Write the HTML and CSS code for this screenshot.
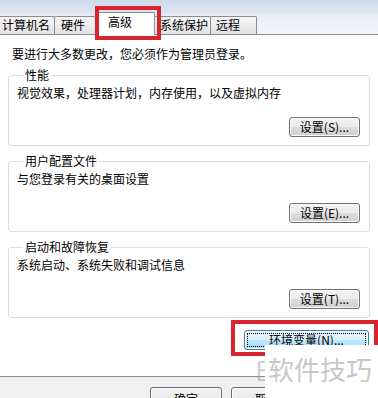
FILE: index.html
```html
<!DOCTYPE html>
<html lang="zh-CN">
<head>
  <meta charset="UTF-8" />
  <meta name="viewport" content="width=device-width, initial-scale=1.0"/>
  <title>系统属性 - 高级</title>
  <link rel="stylesheet" href="styles.css">
</head>
<body>
  <div class="window">
    <div class="frame-top"></div>

    <!-- tabs -->
    <div class="tabs">
      <div class="tab tab-name">计算机名</div>
      <div class="tab tab-hw">硬件</div>
      <div class="tab tab-adv active">高级</div>
      <div class="tab tab-prot">系统保护</div>
      <div class="tab tab-remote">远程</div>
    </div>

    <!-- tab page -->
    <div class="page">
      <p class="notice">要进行大多数更改，您必须作为管理员登录。</p>

      <fieldset class="group">
        <legend>性能</legend>
        <p class="desc">视觉效果，处理器计划，内存使用，以及虚拟内存</p>
        <div class="actions"><button class="btn">设置(S)...</button></div>
      </fieldset>

      <fieldset class="group">
        <legend>用户配置文件</legend>
        <p class="desc">与您登录有关的桌面设置</p>
        <div class="actions"><button class="btn">设置(E)...</button></div>
      </fieldset>

      <fieldset class="group">
        <legend>启动和故障恢复</legend>
        <p class="desc">系统启动、系统失败和调试信息</p>
        <div class="actions"><button class="btn">设置(T)...</button></div>
      </fieldset>

      <div class="actions env-row">
        <button class="btn btn-env">环境变量(N)...</button>
      </div>
    </div>

    <div class="footer">
      <button class="btn btn-dlg">确定</button>
      <button class="btn btn-dlg">取消</button>
    </div>

    <!-- annotations over the screenshot -->
    <div class="mark mark-tab"></div>
    <div class="mark mark-env"></div>
    <div class="watermark">
      <span class="wm-logo">E</span>
      <span class="wm-text">软件技巧</span>
    </div>
  </div>
</body>
</html>
```

FILE: styles.css
```css
* {
  box-sizing: border-box;
}
body {
  margin: 0;
  font-family: "Noto Sans CJK SC", "Liberation Sans", sans-serif;
  font-size: 12px;
  color: #000;
  background: #f0f0f0;
}
.window {
  position: relative;
  width: 378px;
  height: 398px;
  overflow: hidden;
  background: #f0f0f0;
}
.frame-top {
  height: 12px;
  background: linear-gradient(#cddaeb, #dbe5f1);
}

/* tabs */
.tabs {
  display: flex;
  align-items: flex-end;
  height: 22px;
  margin-left: -5px;
  background: linear-gradient(#dbe5f1 0, #e9eef5 4px, #f3f4f6 100%);
}
.tab {
  height: 18px;
  line-height: 16px;
  border: 1px solid #898c95;
  border-bottom: none;
  border-radius: 2px 2px 0 0;
  background: linear-gradient(#f5f5f5, #e3e3e3);
  margin-right: -1px;
  white-space: nowrap;
}
.tab-name { width: 60px; padding-left: 6px; }
.tab-hw { width: 42px; padding-left: 6px; }
.tab-adv { width: 60px; padding-left: 12px; }
.tab-prot { width: 57px; padding-left: 5px; }
.tab-remote { width: 47px; padding-left: 5px; }
.tab.active {
  position: relative;
  z-index: 1;
  height: 23px;
  margin-bottom: -1px;
  line-height: 18px;
  background: #fff;
}

.page {
  height: 343px;
  background: #fff;
  border-top: 1px solid #898c95;
  border-bottom: 1px solid #898c95;
  padding-top: 11px;
}
.notice {
  margin: 0 0 6px 12px;
  line-height: 16px;
}

/* group boxes */
.group {
  margin: 0 8px 8px;
  padding: 3px 9px 8px 8px;
  border: 1px solid #d5dfe5;
  border-radius: 3px;
  min-width: 0;
}
.group legend {
  margin-left: 6px;
  padding: 0 2px;
  line-height: 14px;
}
.desc {
  margin: 0;
  line-height: 16px;
}
.actions {
  display: flex;
  justify-content: flex-end;
  margin-top: 16px;
}

.btn {
  height: 20px;
  padding: 0;
  font-family: inherit;
  font-size: 12px;
  line-height: 16px;
  color: #000;
  border: 1px solid #707070;
  border-radius: 3px;
  background: linear-gradient(#f2f2f2 0%, #ebebeb 50%, #dddddd 51%, #cfcfcf 100%);
  box-shadow: inset 0 0 0 1px #fbfbfb;
}
.group .btn {
  width: 71px;
}
.env-row {
  margin: 12px 9px 0 0;
}
.btn-env {
  width: 125px;
  border-color: #3c7fb1;
  background: linear-gradient(#eaf6fd 0%, #d9f0fc 50%, #bee6fd 51%, #a7d9f5 100%);
  outline: 1px dotted #000;
  outline-offset: -4px;
}

.footer {
  display: flex;
  gap: 9px;
  padding: 10px 0 0 150px;
}
.btn-dlg {
  width: 72px;
  height: 23px;
}

/* red annotation boxes */
.mark {
  position: absolute;
  border: 4px solid #d9232d;
}
.mark-tab {
  left: 95px;
  top: 6px;
  width: 66px;
  height: 34px;
  z-index: 2;
}
.mark-env {
  left: 231px;
  top: 320px;
  width: 147px;
  height: 36px;
}

/* watermark */
.watermark {
  position: absolute;
  left: 265px;
  top: 345px;
  width: 113px;
  height: 53px;
  background: #fff;
  z-index: 3;
}
.wm-logo {
  position: absolute;
  left: -10px;
  top: 10px;
  width: 10px;
  overflow: hidden;
  font-size: 27px;
  line-height: 30px;
  color: rgba(150, 150, 150, 0.45);
}
.wm-text {
  display: block;
  padding: 9px 0 0 3px;
  font-size: 26px;
  line-height: 30px;
  letter-spacing: 0;
  color: #c8c8c8;
  white-space: nowrap;
}
```
